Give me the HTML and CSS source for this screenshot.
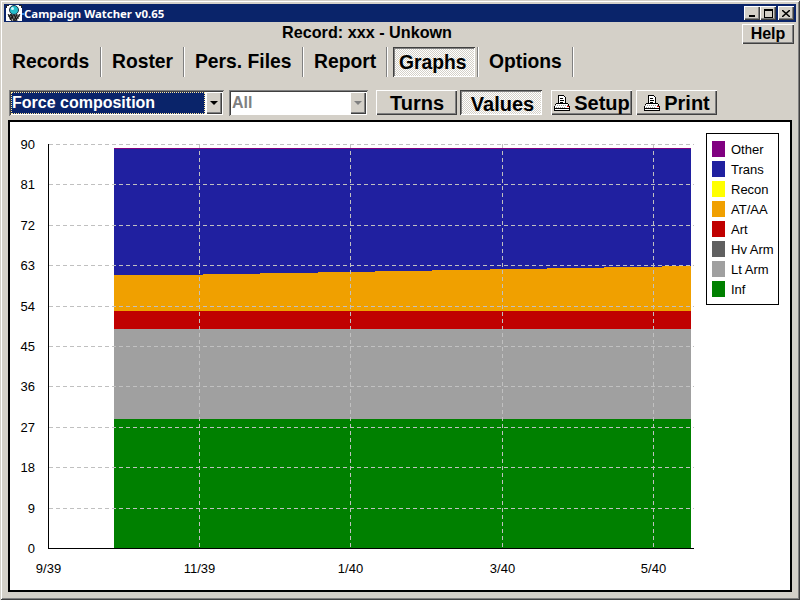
FILE: index.html
```html
<!DOCTYPE html>
<html lang="en">
<head>
    <meta charset="UTF-8">
    <meta name="viewport" content="width=device-width, initial-scale=1.0">
    <title>Campaign Watcher v0.65</title>
    <link rel="stylesheet" href="styles.css">
</head>
<body>
    <div class="window">
        <div class="titlebar">
            <svg class="app-icon" width="18" height="18" viewBox="0 0 18 18">
                <rect y="1" width="16" height="16" fill="#fff"/>
                <path d="M0 1h3v1H1v2H0zM13 1h3v3h-1V2h-2z" fill="#222"/>
                <path d="M2 10h12l-3 7H5z" fill="#bbb"/>
                <path d="M2 10l4 7M5 10l3 7M8 10l3 7M11 10l-3 7M14 10l-5 7M5 10l-2 3M8 10l-4 6M2 12h12M3 14h10" stroke="#111" stroke-width="1" fill="none"/>
                <circle cx="8" cy="6" r="4.5" fill="#25bccb" stroke="#234" stroke-width="1"/>
                <circle cx="6.5" cy="4.5" r="1.5" fill="#d5f7fa"/>
                <rect x="16" y="9" width="2" height="2" fill="#3a8ee8"/>
            </svg>
            <span class="title-text">Campaign Watcher v0.65</span>
            <div class="win-buttons">
                <button class="win-btn win-min"><span></span></button>
                <button class="win-btn win-max"><span></span></button>
                <button class="win-btn win-close">
                    <svg width="8" height="7" viewBox="0 0 8 7"><path d="M0 0l8 7M8 0L0 7" stroke="#000" stroke-width="1.5"/></svg>
                </button>
            </div>
        </div>

        <div class="record-row">
            <div class="record-name">Record: xxx - Unkown</div>
            <button class="btn help-btn">Help</button>
        </div>

        <div class="tabs">
            <div class="tab tab-records">Records</div>
            <div class="tab tab-roster">Roster</div>
            <div class="tab tab-files">Pers. Files</div>
            <div class="tab tab-report">Report</div>
            <div class="tab tab-graphs"><span class="tab-pressed">Graphs</span></div>
            <div class="tab tab-options">Options</div>
        </div>

        <div class="toolbar">
            <div class="combo combo-type">
                <div class="combo-value selected">Force composition</div>
                <div class="combo-arrow"><i></i></div>
            </div>
            <div class="combo combo-filter">
                <div class="combo-value disabled">All</div>
                <div class="combo-arrow arrow-off"><i></i></div>
            </div>
            <button class="btn tool-btn btn-turns">Turns</button>
            <button class="btn tool-btn btn-values pressed">Values</button>
            <button class="btn tool-btn btn-setup">
                <svg class="printer" width="16" height="16" viewBox="0 0 16 16" shape-rendering="crispEdges">
                    <path d="M4.5.5h5l2 2v6h-7z" fill="#fff" stroke="#000"/>
                    <path d="M6 3h3M6 5h4M6 7h3" stroke="#000"/>
                    <path d="M2.5 8.5h11l2 3v4H.5v-4z" fill="#fff" stroke="#000"/>
                    <path d="M1 10.5h14" stroke="#999" stroke-dasharray="1 1"/>
                    <path d="M1 13.5h14" stroke="#000"/>
                    <path d="M2 12h9" stroke="#999" stroke-dasharray="1 1"/>
                    <rect x="13" y="11" width="2" height="1" fill="#e00000"/>
                </svg>
                Setup
            </button>
            <button class="btn tool-btn btn-print">
                <svg class="printer" width="16" height="16" viewBox="0 0 16 16" shape-rendering="crispEdges">
                    <path d="M4.5.5h5l2 2v6h-7z" fill="#fff" stroke="#000"/>
                    <path d="M6 3h3M6 5h4M6 7h3" stroke="#000"/>
                    <path d="M2.5 8.5h11l2 3v4H.5v-4z" fill="#fff" stroke="#000"/>
                    <path d="M1 10.5h14" stroke="#999" stroke-dasharray="1 1"/>
                    <path d="M1 13.5h14" stroke="#000"/>
                    <path d="M2 12h9" stroke="#999" stroke-dasharray="1 1"/>
                    <rect x="13" y="11" width="2" height="1" fill="#e00000"/>
                </svg>
                Print
            </button>
        </div>

        <div class="chart">
            <!-- viewBox uses window coordinates -->
            <svg class="chart-svg" width="780" height="468" viewBox="10 122 780 468">
                <g shape-rendering="crispEdges">
                    <rect x="114" y="148" width="577" height="2" fill="#800080"/>
                    <rect x="114" y="149" width="577" height="162" fill="#2020a0"/>
                    <polygon fill="#f0a000" points="114,275 203,275 203,274 260,274 260,273 318,273 318,272 375,272 375,271 432,271 432,270 490,270 490,269 547,269 547,268 604,268 604,267 662,267 662,266 691,266 691,311 114,311"/>
                    <rect x="114" y="311" width="577" height="18" fill="#c00000"/>
                    <rect x="114" y="329" width="577" height="90" fill="#a0a0a0"/>
                    <rect x="114" y="419" width="577" height="129" fill="#008000"/>
                </g>

                <g class="grid" shape-rendering="crispEdges">
                    <path d="M49 144.5H694"/>
                    <path d="M49 184.5H694"/>
                    <path d="M49 225.5H694"/>
                    <path d="M49 265.5H694"/>
                    <path d="M49 306.5H694"/>
                    <path d="M49 346.5H694"/>
                    <path d="M49 386.5H694"/>
                    <path d="M49 427.5H694"/>
                    <path d="M49 467.5H694"/>
                    <path d="M49 508.5H694"/>
                    <path d="M199.5 144V548"/>
                    <path d="M350.5 144V548"/>
                    <path d="M502.5 144V548"/>
                    <path d="M653.5 144V548"/>
                </g>

                <path class="axis" d="M48.5 144V548.5H694" shape-rendering="crispEdges"/>

                <g class="y-labels">
                    <text x="35" y="149">90</text>
                    <text x="35" y="189">81</text>
                    <text x="35" y="230">72</text>
                    <text x="35" y="270">63</text>
                    <text x="35" y="311">54</text>
                    <text x="35" y="351">45</text>
                    <text x="35" y="391">36</text>
                    <text x="35" y="432">27</text>
                    <text x="35" y="472">18</text>
                    <text x="35" y="513">9</text>
                    <text x="35" y="553">0</text>
                </g>
                <g class="x-labels">
                    <text x="48.5" y="573">9/39</text>
                    <text x="199.5" y="573">11/39</text>
                    <text x="350.5" y="573">1/40</text>
                    <text x="502.5" y="573">3/40</text>
                    <text x="653.5" y="573">5/40</text>
                </g>
            </svg>

            <div class="legend">
                <div class="legend-item"><span class="swatch c-other"></span>Other</div>
                <div class="legend-item"><span class="swatch c-trans"></span>Trans</div>
                <div class="legend-item"><span class="swatch c-recon"></span>Recon</div>
                <div class="legend-item"><span class="swatch c-ataa"></span>AT/AA</div>
                <div class="legend-item"><span class="swatch c-art"></span>Art</div>
                <div class="legend-item"><span class="swatch c-hvarm"></span>Hv Arm</div>
                <div class="legend-item"><span class="swatch c-ltarm"></span>Lt Arm</div>
                <div class="legend-item"><span class="swatch c-inf"></span>Inf</div>
            </div>
        </div>
    </div>
</body>
</html>
```
FILE: styles.css
```css
html, body {
    margin: 0;
    padding: 0;
}
body {
    font-family: "Liberation Sans", Arial, sans-serif;
    color: #000;
    background-color: #d4d0c8;
}
.window {
    box-sizing: border-box;
    width: 800px;
    height: 600px;
    padding: 4px;
    display: flex;
    flex-direction: column;
    background-color: #d4d0c8;
    box-shadow: inset 1px 1px #d4d0c8, inset -1px -1px #404040, inset 2px 2px #fff, inset -2px -2px #808080;
}
.titlebar {
    height: 18px;
    flex: none;
    display: flex;
    align-items: center;
    background-color: #0a246a;
    color: #fff;
}
.app-icon {
    margin-left: 2px;
    flex: none;
}
.title-text {
    font-family: "Noto Sans", sans-serif;
    font-size: 11.4px;
    font-weight: bold;
}
.win-buttons {
    margin-left: auto;
    margin-right: 2px;
    display: flex;
}
.win-btn {
    width: 16px;
    height: 14px;
    padding: 0;
    border: none;
    display: flex;
    align-items: center;
    justify-content: center;
    background-color: #d4d0c8;
    box-shadow: inset 1px 1px #fff, inset -1px -1px #404040, inset -2px -2px #808080;
}
.win-close {
    margin-left: 2px;
}
.win-min span {
    width: 6px;
    height: 2px;
    margin-top: 6px;
    background-color: #000;
}
.win-max span {
    box-sizing: border-box;
    width: 9px;
    height: 9px;
    border: 1px solid #000;
    border-top-width: 2px;
}
.btn {
    box-sizing: border-box;
    padding: 0;
    border: none;
    font-family: "Liberation Sans", Arial, sans-serif;
    font-weight: bold;
    color: #000;
    background-color: #d4d0c8;
    box-shadow: inset 1px 1px #fff, inset -1px -1px #404040, inset -2px -2px #808080;
}
.record-row {
    height: 25px;
    flex: none;
    display: flex;
    align-items: flex-start;
    padding: 0 2px 0 278px;
}
.record-name {
    font-size: 16.2px;
    font-weight: bold;
    line-height: 20px;
}
.help-btn {
    width: 52px;
    height: 20px;
    margin-top: 2px;
    margin-left: auto;
    font-size: 16px;
}
.tabs {
    height: 30px;
    flex: none;
    display: flex;
    font-size: 19.3px;
    font-weight: bold;
}
.tab {
    box-sizing: border-box;
    line-height: 29px;
    padding-left: 8px;
    border-right: 1px solid #fff;
    box-shadow: inset -1px 0 #808080;
}
.tab-records { width: 98px; }
.tab-roster { width: 83px; padding-left: 10px; }
.tab-files { width: 119px; padding-left: 10px; }
.tab-report { width: 84px; padding-left: 10px; }
.tab-graphs { width: 91px; padding-left: 5px; }
.tab-options { width: 95px; padding-left: 10px; }
.tab-pressed {
    box-sizing: border-box;
    display: block;
    width: 82px;
    height: 30px;
    padding-left: 6px;
    line-height: 31px;
    background: repeating-conic-gradient(#fff 0 25%, #d4d0c8 0 50%) 0 0 / 2px 2px;
    box-shadow: inset 1px 1px #404040, inset -1px -1px #fff, inset 2px 2px #808080;
}
.toolbar {
    margin-top: 13px;
    height: 26px;
    flex: none;
    display: flex;
    padding-left: 5px;
}
.combo {
    box-sizing: border-box;
    height: 26px;
    padding: 2px;
    display: flex;
    background-color: #fff;
    box-shadow: inset 1px 1px #808080, inset -1px -1px #d4d0c8, inset 2px 2px #404040;
}
.combo-type {
    width: 215px;
}
.combo-filter {
    width: 139px;
    margin-left: 5px;
}
.combo-value {
    flex: 1;
    padding-left: 1px;
    font-size: 16px;
    font-weight: bold;
    line-height: 21px;
}
.combo-value.selected {
    color: #fff;
    background-color: #0a246a;
    outline: 1px dotted #ffe9a0;
    outline-offset: -1px;
}
.combo-value.disabled {
    color: #808080;
}
.combo-arrow {
    width: 16px;
    margin-left: 1px;
    display: flex;
    align-items: center;
    justify-content: center;
    background-color: #d4d0c8;
    box-shadow: inset 1px 1px #fff, inset -1px -1px #404040, inset -2px -2px #808080;
}
.combo-arrow i {
    width: 0;
    height: 0;
    border-left: 4px solid transparent;
    border-right: 4px solid transparent;
    border-top: 4px solid #000;
}
.arrow-off i {
    border-top-color: #808080;
}
.tool-btn {
    height: 25px;
    font-size: 20px;
    line-height: 24px;
    display: flex;
    align-items: center;
    justify-content: center;
}
.btn-turns {
    width: 81px;
    margin-left: 8px;
    padding-left: 1px;
}
.btn-values {
    width: 82px;
    margin-left: 3px;
    padding-left: 3px;
}
.btn-setup {
    width: 81px;
    margin-left: 9px;
    padding-left: 1px;
}
.btn-print {
    width: 81px;
    margin-left: 4px;
    padding-left: 1px;
}
.tool-btn.pressed {
    padding-top: 2px;
    background: repeating-conic-gradient(#fff 0 25%, #d4d0c8 0 50%) 0 0 / 2px 2px;
    box-shadow: inset 1px 1px #404040, inset -1px -1px #fff, inset 2px 2px #808080;
}
.printer {
    margin-right: 4px;
    flex: none;
}
.chart {
    position: relative;
    box-sizing: border-box;
    width: 784px;
    height: 472px;
    margin: 4px 0 0 4px;
    flex: none;
    border: 2px solid #000;
    background-color: #fff;
}
.chart-svg {
    display: block;
}
.grid path {
    fill: none;
    stroke: #c0c0c0;
    stroke-width: 1;
    stroke-dasharray: 4 3;
}
.axis {
    fill: none;
    stroke: #000;
    stroke-width: 1;
}
.y-labels text,
.x-labels text {
    font-family: "Liberation Sans", Arial, sans-serif;
    font-size: 13px;
    fill: #000;
}
.y-labels text {
    text-anchor: end;
}
.x-labels text {
    text-anchor: middle;
}
.legend {
    position: absolute;
    left: 696px;
    top: 11px;
    box-sizing: border-box;
    width: 73px;
    height: 172px;
    padding: 7px 0 0 5px;
    border: 1px solid #000;
    background-color: #fff;
}
.legend-item {
    height: 20px;
    display: flex;
    align-items: flex-start;
    font-size: 13px;
    line-height: 18px;
}
.swatch {
    width: 13px;
    height: 16px;
    margin-right: 6px;
    flex: none;
}
.c-other { background-color: #800080; }
.c-trans { background-color: #2020a0; }
.c-recon { background-color: #ffff00; }
.c-ataa { background-color: #f0a000; }
.c-art { background-color: #c00000; }
.c-hvarm { background-color: #606060; }
.c-ltarm { background-color: #a0a0a0; }
.c-inf { background-color: #008000; }
```
